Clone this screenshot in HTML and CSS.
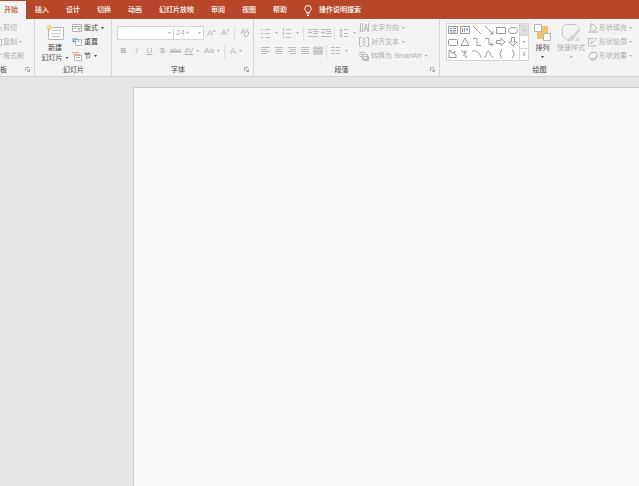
FILE: index.html
```html
<!DOCTYPE html>
<html lang="zh-CN">
<head>
<meta charset="utf-8">
<title>演示文稿</title>
<link rel="stylesheet" href="styles.css">
</head>
<body>
<nav class="tabs">
  <button class="tab active">开始</button>
  <button class="tab">插入</button>
  <button class="tab">设计</button>
  <button class="tab">切换</button>
  <button class="tab">动画</button>
  <button class="tab">幻灯片放映</button>
  <button class="tab">审阅</button>
  <button class="tab">视图</button>
  <button class="tab">帮助</button>
  <button class="tab tell">
    <svg width="8" height="11" viewBox="0 0 8 11"><path d="M2.5 7.5C2.5 6 .8 5.500 .8 3.700a3.200 3.200 0 0 1 6.400 0C7.200 5.500 5.500 6 5.500 7.500zM2.700 9h2.600M3 10.400h2"/></svg>
    操作说明搜索
  </button>
</nav>

<header class="ribbon">
  <section class="group clipboard">
    <div class="body column off">
      <button class="cmd"><svg width="2" height="10"><path d="M0 4l2 3M1 8h1"/></svg>剪切</button>
      <button class="cmd"><svg width="2" height="10"><path d="M0 2.500h1.500v6H0"/></svg>复制<i class="caret"></i></button>
      <button class="cmd"><svg width="2" height="10"><path d="M0 4l2-2"/></svg>格式刷</button>
    </div>
    <div class="caption"><span>板</span><button class="launch" aria-label="剪贴板选项"><svg width="5" height="5"><path d="M.5 4V.500H4M2 2l2.500 2.500M4.500 2v2.500H2"/></svg></button></div>
  </section>

  <section class="group slides">
    <div class="body">
      <button class="big new">
        <svg width="19" height="18"><path class="paper" d="M2.500 3.500h15v12h-15z"/><path class="gray" d="M7 6.500h8M5 9.500h10M5 12.500h10"/><path class="gold" d="M3.500 0v7M0 3.500h7M1 1l5 5M6 1L1 6"/></svg>
        <span>新建</span><span class="line">幻灯片<i class="caret"></i></span>
      </button>
      <div class="column">
        <button class="cmd"><svg width="10" height="10"><path class="paper" d="M.5 1.500h9v7h-9z"/><path d="M1 3.500h8M2 5.500h2M6 5.500h2.500M6 7h2.500"/></svg>版式<i class="caret"></i></button>
        <button class="cmd"><svg width="10" height="10"><path class="paper" d="M3.500 2.500h6v6h-6z"/><path class="blue" d="M1 1v3.500h3.500M1 4c1-3 5-3 6 1"/></svg>重置</button>
        <button class="cmd"><svg width="10" height="10"><path class="orange" d="M0 1.500h7M1 3.500h7"/><path class="paper" d="M2.500 4.500h7v5h-7z"/><path d="M4 6.500h4"/></svg>节<i class="caret"></i></button>
      </div>
    </div>
    <div class="caption"><span>幻灯片</span></div>
  </section>

  <section class="group font">
    <div class="body rows off">
      <div class="row">
        <label class="combo name"><select aria-label="字体"><option></option></select><i class="caret"></i></label>
        <label class="combo size"><select aria-label="字号"><option>24+</option></select><i class="caret"></i></label>
        <button class="glyph grow">A<sup>▴</sup></button>
        <button class="glyph shrink">A<sup>▾</sup></button>
        <i class="sep"></i>
        <button class="tool" aria-label="清除格式"><svg width="10" height="10"><path d="M1 6l2-5 2 4M2 4h2M4 7l3-4 2 2-3 4zM6 2l3-1"/></svg></button>
      </div>
      <div class="row second">
        <button class="glyph bold">B</button>
        <button class="glyph italic">I</button>
        <button class="glyph under">U</button>
        <button class="glyph bold">S</button>
        <button class="glyph strike">abc</button>
        <button class="glyph drop spacing"><span>AV</span><i class="caret"></i></button>
        <button class="glyph drop">Aa<i class="caret"></i></button>
        <i class="sep"></i>
        <button class="glyph drop colour">A<i class="caret"></i></button>
      </div>
    </div>
    <div class="caption"><span>字体</span><button class="launch" aria-label="字体选项"><svg width="5" height="5"><path d="M.5 4V.500H4M2 2l2.500 2.500M4.500 2v2.500H2"/></svg></button></div>
  </section>

  <section class="group paragraph">
    <div class="body off">
      <div class="rows">
        <div class="row">
          <button class="tool drop" aria-label="项目符号"><svg width="10" height="10"><path d="M0 1.500h2M0 5.500h2M0 9.500h2M4 1.500h5M4 5.500h5M4 9.500h5"/></svg><i class="caret"></i></button>
          <button class="tool drop" aria-label="编号"><svg width="10" height="10"><path d="M1.500 0v3M1.500 4v3M1.500 8v2M4 1.500h5M4 5.500h5M4 9.500h5"/></svg><i class="caret"></i></button>
          <i class="sep"></i>
          <button class="tool" aria-label="减少缩进"><svg width="10" height="10"><path d="M0 1.500h10M5 3.500h5M5 5.500h5M0 8.500h10M4 4.500H1M2.500 3L1 4.500 2.500 6"/></svg></button>
          <button class="tool" aria-label="增加缩进"><svg width="10" height="10"><path d="M0 1.500h10M5 3.500h5M5 5.500h5M0 8.500h10M0 4.500h3M2 3l1.500 1.500L2 6"/></svg></button>
          <i class="sep"></i>
          <button class="tool drop" aria-label="行距"><svg width="10" height="10"><path d="M2 1v8M.5 3L2 1l1.500 2M.5 7L2 9l1.500-2M5 1.500h4M5 5.500h4M5 8.500h4"/></svg><i class="caret"></i></button>
        </div>
        <div class="row second">
          <button class="tool" aria-label="左对齐"><svg width="10" height="10"><path d="M0 1.500h9M0 3.500h6M0 5.500h9M0 7.500h6"/></svg></button>
          <button class="tool" aria-label="居中"><svg width="10" height="10"><path d="M1 1.500h8M2 3.500h6M1 5.500h8M2 7.500h6"/></svg></button>
          <button class="tool" aria-label="右对齐"><svg width="10" height="10"><path d="M1 1.500h8M3 3.500h6M1 5.500h8M3 7.500h6"/></svg></button>
          <button class="tool" aria-label="两端对齐"><svg width="10" height="10"><path d="M1 1.500h8M1 3.500h8M1 5.500h8M1 7.500h8"/></svg></button>
          <button class="tool" aria-label="分散对齐"><svg width="10" height="10"><path class="shade" d="M0 1h10v8H0z"/><path d="M1 1v3M9 1v3M0 5.500h10M1 7.500h8M3 0v3M7 0v3M3 2.500h4"/></svg></button>
          <i class="sep"></i>
          <button class="tool drop" aria-label="分栏"><svg width="10" height="10"><path d="M0 1.500h4M5 1.500h4M0 4.500h4M5 4.500h4M0 7.500h4M5 7.500h4"/></svg><i class="caret"></i></button>
        </div>
      </div>
      <div class="column">
        <button class="cmd"><svg width="10" height="10"><path d="M1.500 0v9M3.500 0v9M.500 7l1 2 1-2M5 9l1.700-8L9 9M5.500 6h3M9.500 0v9"/></svg>文字方向<i class="caret"></i></button>
        <button class="cmd"><svg width="10" height="10"><path d="M3 .500H.500v9H3M7 .500h2.500v9H7M5 1v3M4 2.500L5 1l1 1.500M5 6v3M4 7.500L5 9l1-1.500M3 5h4"/></svg>对齐文本<i class="caret"></i></button>
        <button class="cmd"><svg width="10" height="10"><path d="M0 1.500h6M0 3.500h3M1 5.500h2M3.500 3.500h5v5h-5zM5 5.500h4.500v4H5z"/></svg>转换为 SmartArt<i class="caret"></i></button>
      </div>
    </div>
    <div class="caption"><span>段落</span><button class="launch" aria-label="段落选项"><svg width="5" height="5"><path d="M.5 4V.500H4M2 2l2.500 2.500M4.500 2v2.500H2"/></svg></button></div>
  </section>

  <section class="group drawing">
    <div class="body">
      <div class="gallery">
        <div class="shapes">
          <button aria-label="文本框"><svg width="10" height="10"><path d="M.5 1.500h9v7h-9z"/><path class="blue" d="M2 3.500h2M2 5.500h2"/><path d="M5 3.500h3M5 5.500h3M2 7h6"/></svg></button>
          <button aria-label="竖排文本框"><svg width="10" height="10"><path d="M.5 1.500h9v7h-9zM2.500 3v4M4.500 3v4"/><path class="blue" d="M7 3v3M6 4h2"/></svg></button>
          <button aria-label="直线"><svg width="10" height="10"><path d="M1 1l8 8"/></svg></button>
          <button aria-label="箭头"><svg width="10" height="10"><path d="M1 1l8 8M9 6v3H6"/></svg></button>
          <button aria-label="矩形"><svg width="10" height="10"><path d="M.5 2.500h9v6h-9z"/></svg></button>
          <button aria-label="椭圆"><svg width="10" height="10"><ellipse cx="5" cy="5.500" rx="4.500" ry="3"/></svg></button>
          <button aria-label="圆角矩形"><svg width="10" height="10"><rect x=".5" y="2.500" width="9" height="6" rx="1"/></svg></button>
          <button aria-label="三角形"><svg width="10" height="10"><path d="M5 1L9 8.500H1z"/></svg></button>
          <button aria-label="肘形连接符"><svg width="10" height="10"><path d="M1 1.500h4v7h4"/></svg></button>
          <button aria-label="肘形箭头"><svg width="10" height="10"><path d="M1 1.500h4v6h4M7 5.500l2 2-2 2"/></svg></button>
          <button aria-label="右箭头"><svg width="10" height="10"><path d="M.5 3.500H5v-2L9 5 5 8.500v-2H.5z"/></svg></button>
          <button aria-label="下箭头"><svg width="10" height="10"><path d="M3.500 .500h3V5h2.500L5 9 1 5h2.500z"/></svg></button>
          <button aria-label="任意多边形"><svg width="10" height="10"><path d="M3 1.500H1v7h7V5.500L6 5l1-3-2 2-2-.5z"/></svg></button>
          <button aria-label="自由曲线"><svg width="10" height="10"><path d="M3 1C1 2 2 4 4 3s3 1 1 2-2 2 0 2 3 1 1 2M6 1L4 5"/></svg></button>
          <button aria-label="弧形"><svg width="10" height="10"><path d="M0 2c5-1 8 2 9 7"/></svg></button>
          <button aria-label="曲线"><svg width="10" height="10"><path d="M0 8c3 1 2-6 4.500-6S6 9 9.500 8"/></svg></button>
          <button aria-label="左大括号"><svg width="10" height="10"><path d="M6 1C4 1 5 5 3.500 5 5 5 4 9 6 9"/></svg></button>
          <button aria-label="右大括号"><svg width="10" height="10"><path d="M4 1c2 0 1 4 2.500 4C5 5 6 9 4 9"/></svg></button>
        </div>
        <div class="scroller">
          <button class="up" aria-label="上一行"><i class="caret flip"></i></button>
          <button aria-label="下一行"><i class="caret"></i></button>
          <button class="more" aria-label="更多形状"><i class="caret"></i></button>
        </div>
      </div>
      <button class="big arrange">
        <svg width="18" height="18"><path class="block" d="M6 2h8v7H6zM3 8h7v7H3z"/><path class="paper" d="M.500 .500h7v7h-7zM9.500 9.500h7v7h-7z"/></svg>
        <span>排列</span><i class="caret"></i>
      </button>
      <button class="big styles off">
        <svg width="20" height="18"><path d="M9 16.500H7L1.500 12V3.500L4 .500h11l3 3"/><path class="shade" d="M19 3v4l-5 6-2-2zM12 11c-4 0-2 3-6 4 5 3 9 1 8-2zM14 17l4-5v5z"/></svg>
        <span>快速样式</span><i class="caret"></i>
      </button>
      <div class="column off">
        <button class="cmd"><svg width="10" height="10"><path d="M2 4l3-3 4 4-3 3H3zM3 0v4"/><path class="shade" d="M0 8h10v2H0z"/></svg>形状填充<i class="caret"></i></button>
        <button class="cmd"><svg width="10" height="10"><path d="M6 1.500H.500V8M3 7l6-6M3 7l1-3"/><path class="shade" d="M0 8h8v2H0z"/></svg>形状轮廓<i class="caret"></i></button>
        <button class="cmd"><svg width="10" height="10"><path class="shade" d="M1 6l2 4h4l3-4V3z"/><path class="paper" d="M3 1.500h5l1 3-2 3H2l-1-2z"/></svg>形状效果<i class="caret"></i></button>
      </div>
    </div>
    <div class="caption"><span>绘图</span></div>
  </section>
</header>

<main class="workspace"><div class="slide"></div></main>
</body>
</html>
```
FILE: styles.css
```css
* { box-sizing: border-box; }
body {
  margin: 0;
  min-height: 100vh;
  display: flex;
  flex-direction: column;
  overflow: hidden;
  background: #e5e5e5;
  color: #444;
  font: 7px/10px "Liberation Sans", "Noto Sans CJK SC", sans-serif;
}
button, select { margin: 0; padding: 0; border: 0; background: none; color: inherit; font: inherit; white-space: nowrap; }
svg { display: block; flex: none; fill: none; stroke: currentColor; }

.tabs { display: flex; height: 19px; padding-top: 1px; background: #b7472a; color: #fff; }
.tab { padding: 0 8px 0 9px; flex: none; font-weight: 500; }
.tab.active { padding-left: 4px; background: #f4f3f3; color: #b7472a; }
.tell { display: flex; align-items: center; gap: 7px; }

.ribbon { display: flex; height: 58px; background: #f4f3f3; border-bottom: 1px solid #d2d2d2; }
.group { display: flex; flex-direction: column; flex: none; padding-top: 2px; }
.group + .group { border-left: 1px solid #d5d5d5; }
.body { display: flex; height: 42px; }
.off { color: #b0afaf; }
.off svg { color: #bcbbbb; }
.caption { display: flex; align-items: center; height: 13px; }
.caption span { flex: 1; text-align: center; }
.launch { width: 9px; color: #aaa; }

.column { display: flex; flex-direction: column; }
.cmd { display: flex; align-items: center; gap: 2px; height: 14px; }
.slides .cmd svg { color: #aaa; }
.caret { flex: none; width: 3px; height: 2px; margin-left: 1px; background: currentColor; clip-path: polygon(0 0, 100% 0, 50% 100%); }
.sep { width: 1px; height: 13px; background: #dcdcdc; }
.paper { fill: #fff; stroke: #b5b5b5; }
.gray { stroke: #c5c5c5; }
.gold { stroke: #f0cd83; }
.blue { stroke: #5b93c4; }
.orange { stroke: #e9a27c; }
.shade { fill: #d5d5d5; stroke: none; }
.block { fill: #f0c36d; stroke: none; }

.clipboard { width: 34px; }
.clipboard .cmd { gap: 1px; }
.clipboard .caption { justify-content: space-between; }
.clipboard .caption span { flex: none; }

.slides { padding-left: 6px; padding-right: 5px; }
.slides .body { gap: 3px; }
.big { display: flex; flex-direction: column; align-items: center; padding-top: 3px; }
.big svg { margin-bottom: 1px; color: #aaa; }
.big .line { display: flex; align-items: center; gap: 2px; }
.new { width: 28px; }
.slides .cmd { width: 34px; }

.rows { padding-top: 5px; }
.body.rows { display: block; }
.row { display: flex; align-items: center; height: 14px; }
.second { height: 16px; margin-top: 3px; }
.font { width: 142px; padding-left: 5px; }
.combo { display: flex; align-items: center; height: 14px; background: #fff; border: 1px solid #d5d5d5; padding-right: 2px; }
.combo select { appearance: none; flex: 1; min-width: 0; }
.name { width: 57px; }
.size { width: 30px; border-left: 0; padding-left: 2px; }
.size select { font-size: 8px; }
.glyph { width: 13px; font-size: 8px; display: flex; align-items: center; justify-content: center; }
.glyph sup { font-size: 5px; line-height: 5px; align-self: flex-start; }
.grow { width: 15px; font-size: 9px; }
.bold { font-weight: bold; }
.italic { font-style: italic; }
.under { text-decoration: underline; }
.strike { text-decoration: line-through; font-size: 7px; }
.glyph.drop { width: 20px; gap: 2px; }
.spacing span { font-size: 7px; text-decoration: underline; }
.colour { font-size: 9px; }
.font .sep { margin: 0 3px 0 2px; }
.font .second .sep { margin-right: 1px; }

.tool { display: flex; align-items: center; justify-content: center; width: 13px; height: 14px; }
.tool.drop { width: 21px; gap: 3px; }
.paragraph { width: 186px; padding-left: 5px; }
.paragraph .rows { width: 100px; }
.paragraph .sep { margin: 0 2px; }
.paragraph .caption span { padding-right: 6px; }
.font .caption span { padding-right: 5px; }

.drawing { flex: 1 0 200px; padding-left: 6px; }
.gallery { display: flex; height: 38px; margin-top: 2px; border: 1px solid #d5d5d5; background: #fff; color: #999; }
.shapes { display: grid; grid-template-columns: repeat(6, 12px); grid-template-rows: repeat(3, 12px); }
.shapes button { display: grid; place-items: center; }
.scroller { display: flex; flex-direction: column; width: 9px; border-left: 1px solid #d5d5d5; }
.scroller button { flex: 1; display: grid; place-items: center; }
.scroller button + button { border-top: 1px solid #d5d5d5; }
.up { background: #ddd; color: #bbb; }
.scroller .caret { margin: 0; }
.flip { transform: rotate(180deg); }
.more .caret { height: 4px; clip-path: polygon(0 0, 100% 0, 100% 25%, 0 25%, 0 50%, 100% 50%, 50% 100%, 0 50%); }
.arrange { width: 27px; }
.styles { width: 30px; }
.styles svg { color: #c5c5c5; }
.big > .caret { margin: 3px 0 0; }
.drawing .column { margin-left: 2px; }
.drawing .cmd { gap: 1px; }
.drawing .caption span { padding-right: 6px; }

.workspace { flex: 1; display: flex; padding: 10px 0 0 133px; }
.slide { flex: 1; background: #fafafa; border: solid #d0d0d0; border-width: 1px 0 0 1px; }
```
